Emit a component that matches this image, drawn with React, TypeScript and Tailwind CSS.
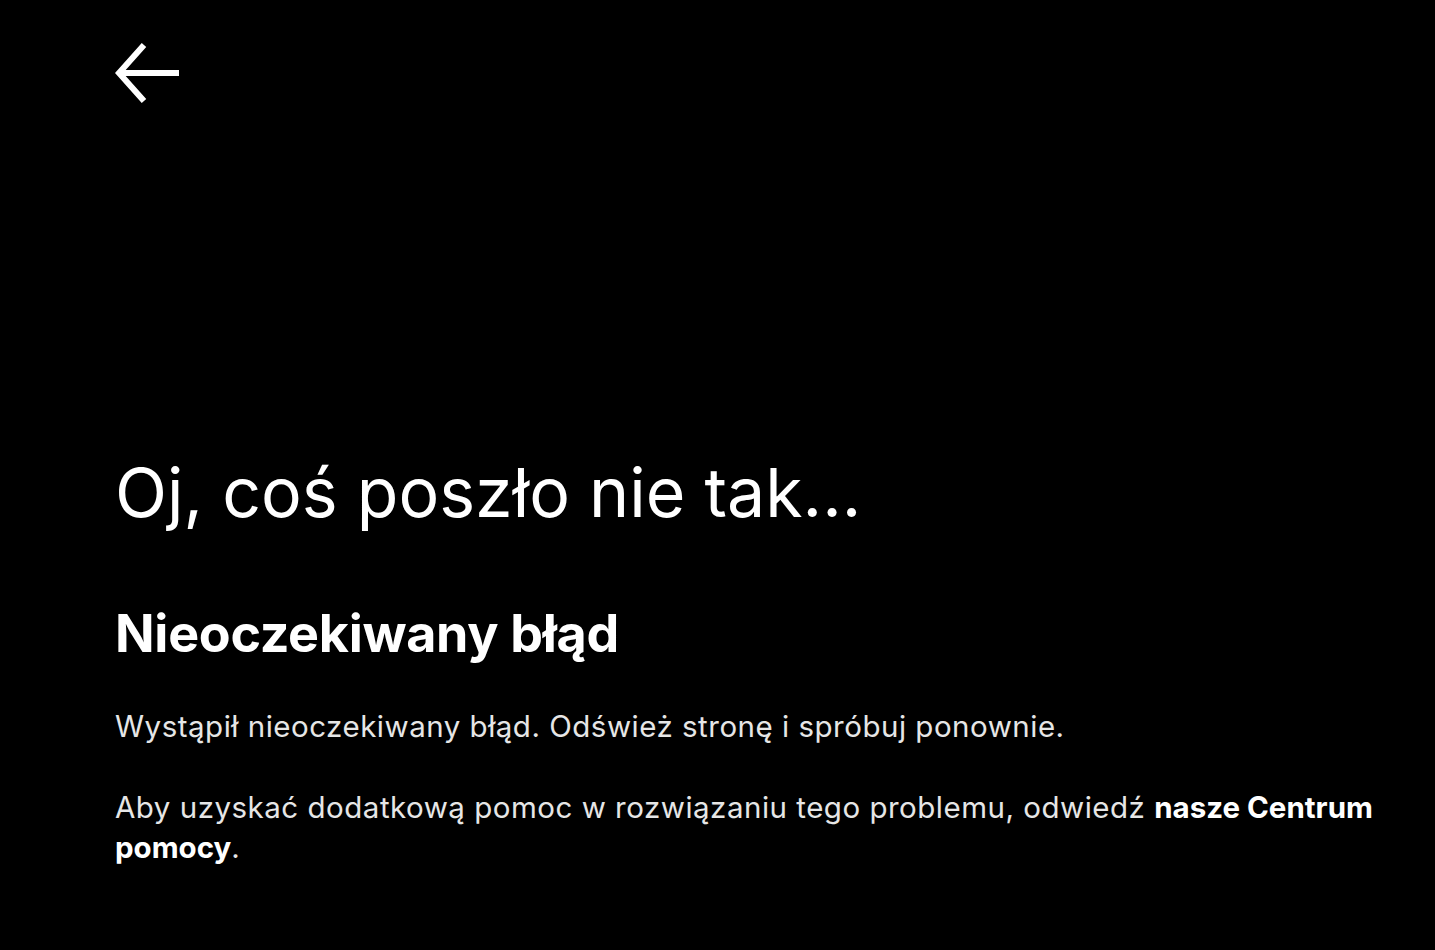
import React from "react";

export default function App() {
  return (
    <div className="min-h-[950px] w-full bg-black text-white" style={{ fontFamily: "Inter, 'Noto Sans', sans-serif" }}>
      <div className="pl-[115px] pr-[45px]">
        <div className="pt-[42px] h-[104px]">
          <svg width="66" height="62" viewBox="0 0 66 62" fill="none" stroke="white" strokeWidth="6" strokeLinecap="butt" strokeLinejoin="miter">
            <path d="M29 3 L4 31 L29 59" />
            <path d="M4 31 L64 31" />
          </svg>
        </div>
        <div className="pt-[348px]">
          <h1 className="text-[68px] leading-[80px] font-normal">Oj, coś poszło nie tak...</h1>
          <h2 className="mt-[72px] text-[52px] leading-[60px] font-bold tracking-[-0.3px]">Nieoczekiwany błąd</h2>
          <div className="mt-[42px] text-[29.5px] leading-[40px] tracking-[0.5px] text-[#e6e6e6]">
            <p>Wystąpił nieoczekiwany błąd. Odśwież stronę i spróbuj ponownie.</p>
            <p className="mt-[41px]">
              Aby uzyskać dodatkową pomoc w rozwiązaniu tego problemu, odwiedź{" "}
              <span className="font-bold text-white tracking-[0px]">nasze Centrum pomocy</span>.
            </p>
          </div>
        </div>
      </div>
    </div>
  );
}
